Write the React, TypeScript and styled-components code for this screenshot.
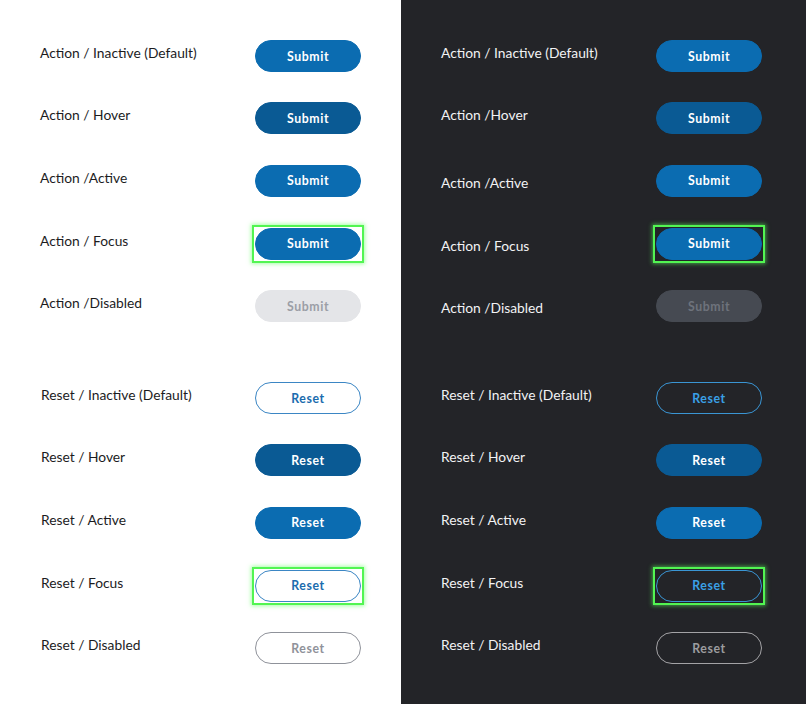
import React from 'react';
import styled, { createGlobalStyle, css } from 'styled-components';

const GlobalStyle = createGlobalStyle`
  html, body {
    margin: 0;
    padding: 0;
  }
  body {
    font-family: Lato, 'Liberation Sans', sans-serif;
  }
`;

type Theme = 'light' | 'dark';
type Kind = 'action' | 'reset';
type State = 'default' | 'hover' | 'active' | 'focus' | 'disabled';

const Page = styled.div`
  display: flex;
  width: 806px;
  height: 704px;
  overflow: hidden;
`;

const Panel = styled.div<{ $theme: Theme }>`
  display: flex;
  flex-direction: column;
  width: ${p => (p.$theme === 'light' ? '401px' : '405px')};
  padding: 25px 0 0 40px;
  box-sizing: border-box;
  background: ${p => (p.$theme === 'light' ? '#ffffff' : '#232428')};
  color: ${p => (p.$theme === 'light' ? '#1c1c1e' : '#f2f2f4')};
`;

const Group = styled.div`
  display: flex;
  flex-direction: column;
  & + & {
    margin-top: 30px;
  }
`;

const Row = styled.div<{ $h: number }>`
  display: flex;
  align-items: center;
  height: ${p => p.$h}px;
`;

const Label = styled.div<{ $shift: number; $indent: number }>`
  width: ${p => 215 - p.$indent}px;
  margin-left: ${p => p.$indent}px;
  font-size: 13.8px;
  line-height: 18px;
  margin-bottom: ${p => 6 - p.$shift * 2}px;
`;

const FocusRing = styled.span<{ $on: boolean }>`
  display: inline-flex;
  ${p =>
    p.$on &&
    css`
      margin: -3px;
      padding: 1px;
      border: 2px solid #52f552;
      box-shadow: 0 0 4px 1px rgba(90, 255, 90, 0.55);
    `}
`;

const palette = {
  light: {
    action: {
      default: ['#0b6cb1', '#0b6cb1', '#ffffff'],
      hover: ['#0a5a94', '#0a5a94', '#ffffff'],
      active: ['#0b6cb1', '#0b6cb1', '#ffffff'],
      focus: ['#0b6cb1', '#0b6cb1', '#ffffff'],
      disabled: ['#e4e5e8', '#e4e5e8', '#9b9ea6'],
    },
    reset: {
      default: ['#ffffff', '#3b86c4', '#1a6cae'],
      hover: ['#0a5a94', '#0a5a94', '#ffffff'],
      active: ['#0b6cb1', '#0b6cb1', '#ffffff'],
      focus: ['#ffffff', '#3b86c4', '#1a6cae'],
      disabled: ['#ffffff', '#8f929a', '#8f929a'],
    },
  },
  dark: {
    action: {
      default: ['#0b6cb1', '#0b6cb1', '#ffffff'],
      hover: ['#0a5a94', '#0a5a94', '#ffffff'],
      active: ['#0b6cb1', '#0b6cb1', '#ffffff'],
      focus: ['#0b6cb1', '#0b6cb1', '#ffffff'],
      disabled: ['#464a52', '#464a52', '#6e737c'],
    },
    reset: {
      default: ['transparent', '#3a95d4', '#3aa0e6'],
      hover: ['#0a5a94', '#0a5a94', '#ffffff'],
      active: ['#0b6cb1', '#0b6cb1', '#ffffff'],
      focus: ['transparent', '#3a95d4', '#3aa0e6'],
      disabled: ['transparent', '#a3a3a6', '#9c9c9f'],
    },
  },
} as const;

const Button = styled.button<{ $bg: string; $border: string; $fg: string }>`
  width: 106px;
  height: 32px;
  border-radius: 16px;
  border: 1px solid ${p => p.$border};
  background: ${p => p.$bg};
  color: ${p => p.$fg};
  font-family: Lato, 'Liberation Sans', sans-serif;
  font-weight: 700;
  font-size: 12.3px;
  letter-spacing: 0.6px;
  padding: 0;
  cursor: pointer;
  box-sizing: border-box;
`;

const states: { state: State; name: string; h: number }[] = [
  { state: 'default', name: 'Inactive (Default)', h: 62 },
  { state: 'hover', name: 'Hover', h: 62 },
  { state: 'active', name: 'Active', h: 63 },
  { state: 'focus', name: 'Focus', h: 63 },
  { state: 'disabled', name: 'Disabled', h: 62 },
];

const labelText = (kind: Kind, state: State, name: string, theme: Theme) => {
  if (kind === 'action') {
    if (state === 'active' || state === 'disabled') return `Action /${name}`;
    if (state === 'hover' && theme === 'dark') return `Action /${name}`;
    return `Action / ${name}`;
  }
  return `Reset / ${name}`;
};

const Column: React.FC<{ theme: Theme }> = ({ theme }) => (
  <Panel $theme={theme}>
    {(['action', 'reset'] as Kind[]).map(kind => (
      <Group key={kind}>
        {states.map(({ state, name, h }) => {
          const [bg, border, fg] = palette[theme][kind][state];
          const shift =
            theme === 'dark' && kind === 'action' && ['active', 'focus', 'disabled'].includes(state)
              ? 5
              : 0;
          return (
            <Row key={state} $h={h}>
              <Label $shift={shift} $indent={kind === 'reset' && theme === 'light' ? 1 : 0}>
                {labelText(kind, state, name, theme)}
              </Label>
              <FocusRing $on={state === 'focus'}>
                <Button $bg={bg} $border={border} $fg={fg} disabled={state === 'disabled'}>
                  {kind === 'action' ? 'Submit' : 'Reset'}
                </Button>
              </FocusRing>
            </Row>
          );
        })}
      </Group>
    ))}
  </Panel>
);

export default function App() {
  return (
    <>
      <GlobalStyle />
      <Page>
        <Column theme="light" />
        <Column theme="dark" />
      </Page>
    </>
  );
}
